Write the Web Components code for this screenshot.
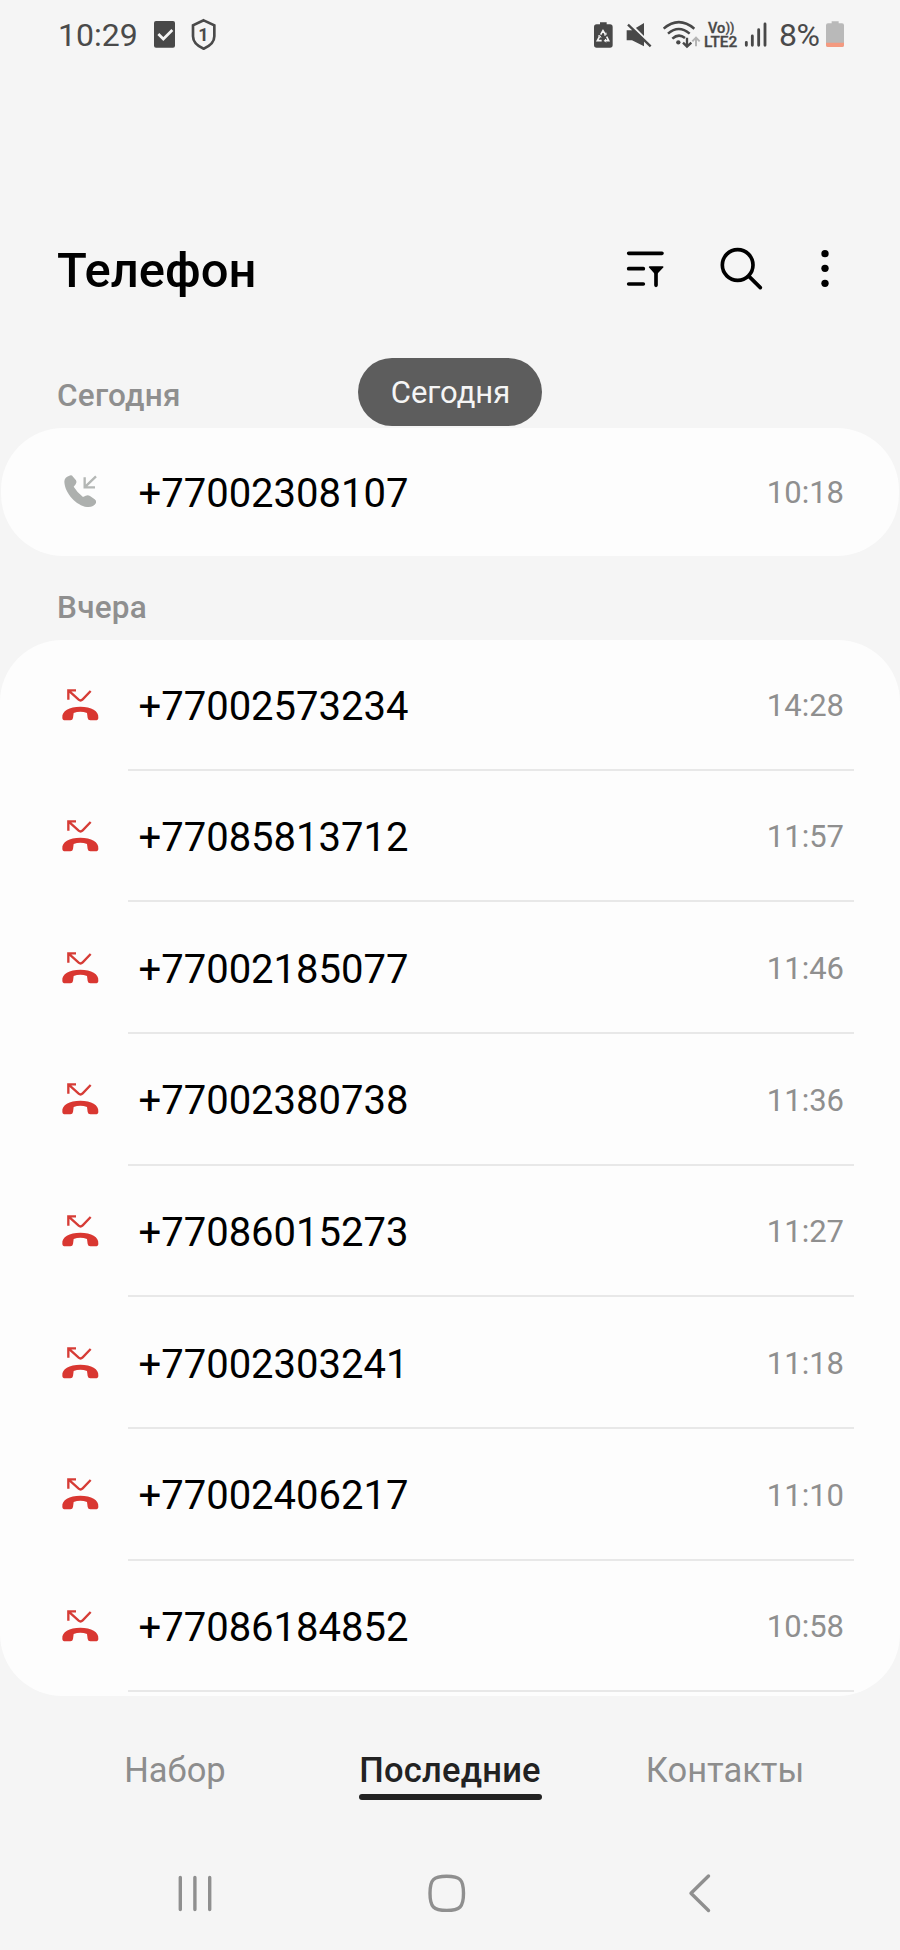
<!DOCTYPE html>
<html lang="ru">
<head>
<meta charset="utf-8">
<title>Телефон</title>
<style>
body{margin:0;background:#f5f5f5;font-family:Roboto,"Noto Sans",sans-serif;}
</style>
</head>
<body>
<phone-app></phone-app>
<script>
const define = (name, html) => customElements.define(name, class extends HTMLElement {
  constructor() {
    super();
    const t = document.createElement('template');
    t.innerHTML = html;
    this.attachShadow({ mode: 'open' }).append(t.content.cloneNode(true));
  }
});

define('status-bar', `
<style>
:host{display:flex;box-sizing:border-box;height:60px;padding:10px 56px 0 58px;color:#4a4a4a;font-size:32px;line-height:50px}
svg{display:block;height:50px;flex:none}
.time{width:96px;white-space:nowrap}
.pct{width:47px;letter-spacing:-.6px;white-space:nowrap}
.grow{flex:1}
</style>
<span class="time">10:29</span>
<svg width="21" viewBox="342 0 63 150"><rect x="342" y="33" width="63" height="80" rx="6" fill="#484848"/><path d="M355 72l15 15 27-27" fill="none" stroke="#f5f5f5" stroke-width="8"/></svg>
<svg width="26" style="margin-left:16px" viewBox="453 0 78 150"><path d="M491 31L523 46V79C523 97 508 109 491 116C474 109 459 97 459 79V46Z" fill="none" stroke="#4a4a4a" stroke-width="8"/><text x="490" y="94" text-anchor="middle" font-family="Roboto" font-weight="700" font-size="54" fill="#4a4a4a">1</text></svg>
<span class="grow"></span>
<svg width="19" viewBox="40 0 57 150"><path d="M58 37H78V43H88Q96 43 96 51V105Q96 113 88 113H48Q40 113 40 105V51Q40 43 48 43H58Z" fill="#484848"/><g fill="none" stroke="#f5f5f5" stroke-width="5"><path d="M60 74L67 62L74 73M78 80L84 92H72M63 92H50L57 79"/><path d="M70 75h6v-7M76 87l-5 5 5 5M52 78l6-1 3 6" stroke-width="3"/></g></svg>
<svg width="26" style="margin-left:13px" viewBox="136 0 78 150"><path d="M138 61H154L190 39V109L154 91H138Z" fill="#484848"/><path d="M141 34L215 108" stroke="#f5f5f5" stroke-width="7"/><path d="M142 44L210 109" stroke="#484848" stroke-width="7"/></svg>
<svg width="40" style="margin-left:10px" viewBox="244 0 120 150"><g fill="none" stroke="#484848" stroke-width="7.5"><path d="M249 56Q294 17 341 56M262 71Q294 43 327 71M275 86Q294 69 313 84"/><path d="M319 83V110M307 98L319 110L332 98" stroke-width="7"/><path d="M346 109V82M335 94L346 83L357 94" stroke="#b4b4b4" stroke-width="6"/></g><circle cx="293" cy="97" r="6.5" fill="#484848"/></svg>
<svg width="35" style="margin-left:2px" viewBox="368 0 105 150"><g font-family="Roboto" fill="#484848" stroke="#484848" stroke-width="1"><text x="380" y="69" font-size="43" font-weight="500" textLength="52" lengthAdjust="spacingAndGlyphs">Vo</text><text x="433" y="67" font-size="38" font-weight="500" textLength="26" lengthAdjust="spacingAndGlyphs">))</text><text x="368" y="112" font-size="46" font-weight="500" textLength="100" lengthAdjust="spacingAndGlyphs">LTE2</text></g></svg>
<svg width="24" style="margin-left:5px" viewBox="488 0 72 150"><path d="M495 97V106M513 78V106M532 59V106M551 42V106" stroke="#484848" stroke-width="8.5" stroke-linecap="round"/></svg>
<span class="pct" style="margin-left:11px">8%</span>
<svg width="18" viewBox="735 0 54 150"><path d="M752 34H773V40H783Q789 40 789 46V105Q789 111 783 111H741Q735 111 735 105V46Q735 40 741 40H752Z" fill="#b9b9b9"/><path d="M735 98H789V105Q789 111 783 111H741Q735 111 735 105Z" fill="#f49a80"/></svg>
`);

define('app-header', `
<style>
:host{display:flex;align-items:center;box-sizing:border-box;height:80px;margin-top:170px;padding:0 64px 0 57px;color:#000}
h1{flex:1;margin:0;font-size:49px;font-weight:500;line-height:80px;padding-top:1px}
svg{display:block;height:80px;fill:none;stroke:#000;stroke-width:11;stroke-linecap:round}
</style>
<h1>Телефон</h1>
<svg width="40" viewBox="75 0 120 240"><path d="M83 70H183M83 116H127M83 162H127M165 125V166"/><path d="M146 111H185L168 129H162Z" fill="#000" stroke-width="5" stroke-linejoin="round"/></svg>
<svg width="44" style="margin-left:54px" viewBox="357 0 132 240"><circle cx="410" cy="105" r="46"/><path d="M444 139L478 173"/></svg>
<svg width="16" style="margin-left:56px" viewBox="657 0 48 240"><g fill="#000" stroke="none"><circle cx="672" cy="71" r="11"/><circle cx="672" cy="115" r="11"/><circle cx="672" cy="160" r="11"/></g></svg>
`);

define('section-title', `
<style>
:host{display:block;padding-left:57px;color:#8f8f8f;font-size:31.5px;letter-spacing:.25px;font-weight:500;line-height:40px}
</style><slot></slot>`);

define('scroll-label', `
<style>
:host{position:absolute;left:358px;top:357.500px;width:184px;height:68.500px;border-radius:35px;background:#5d5d5d;color:#f5f5f5;font-size:31px;line-height:69px;text-align:center;box-sizing:border-box;padding-left:1px}
</style><slot></slot>`);

define('call-card', `
<style>
:host{display:flex;flex-direction:column;background:#fdfdfd;border-radius:62px;box-sizing:border-box}
</style><slot></slot>`);

customElements.define('call-row', class extends HTMLElement {
  constructor() {
    super();
    const missed = !this.hasAttribute('incoming');
    const icon = missed
      ? `<svg viewBox="60 50 120 110"><path d="M85 88V60H108M86 61L116 88Q122 93 128 87L152 62" fill="none" stroke="#d63c36" stroke-width="7"/><path d="M67 142C65 122 88 109 121 109C154 109 177 122 175 142Q175 150 166 150H151Q144 150 143 143L141 128Q121 120 101 128L99 143Q98 150 91 150H76Q67 150 67 142Z" fill="#d93731"/></svg>`
      : `<svg viewBox="180 194 120 110"><path d="M254 204V234H285M256 232L288 201" fill="none" stroke="#b4b7b5" stroke-width="7"/><path d="M208 199Q215 196 219 202L228 213Q232 219 227 225L221 232Q232 250 249 263L257 259Q264 256 270 260L284 270Q290 274 288 281Q280 295 261 293C229 288 195 253 193 217Q193 204 208 199Z" fill="#adb0ae"/></svg>`;
    this.attachShadow({ mode: 'open' }).innerHTML = `
<style>
:host{display:flex;align-items:center;position:relative;box-sizing:border-box;height:131.7px;padding:0 56px 0 60px}
:host([first]){height:130.5px}
svg{width:40px;height:36.67px;flex:none}
.num{flex:1;margin-left:38.5px;padding-top:3px;font-size:40px;line-height:48px;color:#000}
.time{padding-top:2px;font-size:31px;line-height:48px;color:#8f8f8f}
.line{position:absolute;left:128px;right:46px;bottom:0;height:2px;background:#e8e8e8}
:host([incoming]){height:130px}
:host([incoming]) .line{display:none}
</style>${icon}<span class="num"><slot></slot></span><span class="time">${this.getAttribute('time')}</span><div class="line"></div>`;
  }
});

define('tab-bar', `
<style>
:host{display:grid;grid-template-columns:350px 200px 350px;height:60px;margin-top:46px;text-align:center;font-size:34.5px;line-height:56px;color:#8d8d8d}
b{justify-self:center;position:relative;font-weight:500;color:#222;width:183px;white-space:nowrap;letter-spacing:.25px}
b::after{content:"";position:absolute;left:0;right:0;bottom:2px;height:6px;border-radius:3px;background:#222}
</style>
<span>Набор</span><b>Последние</b><span>Контакты</span>`);

define('nav-bar', `
<style>
:host{display:flex;margin-top:61px;padding-left:176px;height:60px}
svg{height:60px;fill:none;stroke:#8f8f8f;stroke-width:3.4;stroke-linecap:round;stroke-linejoin:round}
</style>
<svg width="38" viewBox="176 1863 38 60"><path d="M180.3 1877.500V1909.500M194.9 1877.500V1909.500M209.7 1877.500V1909.500"/></svg>
<svg width="40" style="margin-left:213px" viewBox="427 1863 40 60"><path d="M446.700 1876.300C460 1876.300 463.500 1879.500 463.500 1893.300C463.500 1907 460 1910.400 446.700 1910.400C433.500 1910.400 430 1907 430 1893.300C430 1879.500 433.500 1876.300 446.700 1876.300Z"/></svg>
<svg width="24" style="margin-left:221px" viewBox="688 1863 24 60"><path d="M708.500 1876L691 1893.300L708.500 1910.500"/></svg>`);

define('phone-app', `
<style>
:host{display:block;position:relative;width:900px;height:1950px;overflow:hidden;background:#f5f5f5}
</style>
<status-bar></status-bar>
<app-header></app-header>
<section-title style="margin-top:66px">Сегодня</section-title>
<call-card style="margin:12px 1px 0;height:128px"><call-row incoming time="10:18" style="margin:0 -1px">+77002308107</call-row></call-card>
<section-title style="margin-top:32px">Вчера</section-title>
<call-card style="margin-top:12px;height:1056px">
<call-row first time="14:28">+77002573234</call-row>
<call-row time="11:57">+77085813712</call-row>
<call-row time="11:46">+77002185077</call-row>
<call-row time="11:36">+77002380738</call-row>
<call-row time="11:27">+77086015273</call-row>
<call-row time="11:18">+77002303241</call-row>
<call-row time="11:10">+77002406217</call-row>
<call-row time="10:58">+77086184852</call-row>
</call-card>
<tab-bar></tab-bar>
<nav-bar></nav-bar>
<scroll-label>Сегодня</scroll-label>
`);
</script>
</body>
</html>
